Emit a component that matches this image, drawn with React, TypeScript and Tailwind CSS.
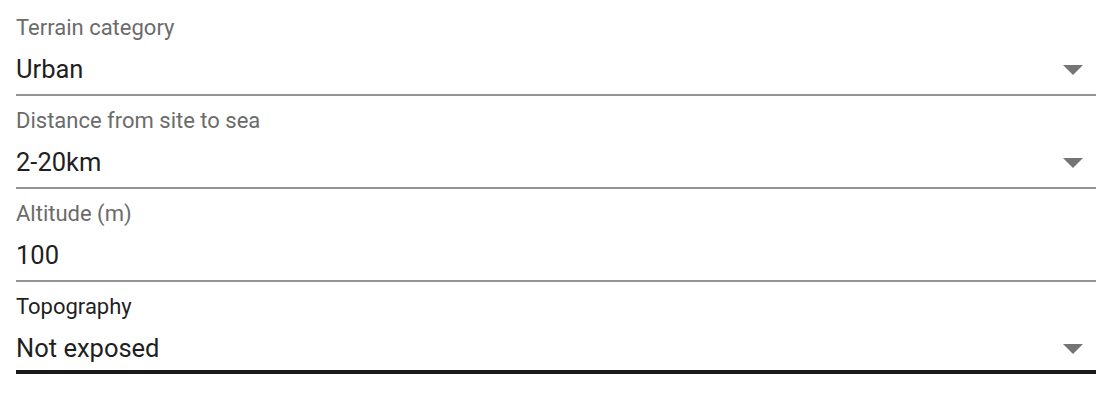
import React from 'react'

interface Field {
  label: string
  value: string
  select?: boolean
  active?: boolean
}

const fields: Field[] = [
  { label: 'Terrain category', value: 'Urban', select: true },
  { label: 'Distance from site to sea', value: '2-20km', select: true },
  { label: 'Altitude (m)', value: '100' },
  { label: 'Topography', value: 'Not exposed', select: true, active: true },
]

const ArrowDrop = () => (
  <svg width="48" height="48" viewBox="0 0 24 24" className="shrink-0 -mr-[1px]" fill="#757575">
    <path d="M7 10l5 5 5-5z" />
  </svg>
)

const FormField: React.FC<{ field: Field }> = ({ field }) => (
  <div
    className={
      field.active
        ? 'pt-[13px] pb-[8px] border-b-4 border-[#1a1a1a]'
        : 'pt-[13px] pb-[11px] border-b-2 border-[#949494]'
    }
  >
    <div className={field.active ? 'h-6 text-[22px] leading-6 text-[#1f1f1f]' : 'h-6 text-[22px] leading-6 text-[#6b6b6b]'}>
      {field.label}
    </div>
    <div className="mt-[15px] h-7 flex items-center justify-between">
      <span className="text-[25.5px] leading-7 text-[#1f1f1f]">{field.value}</span>
      {field.select && <ArrowDrop />}
    </div>
  </div>
)

export default function App() {
  return (
    <div className="w-[1118px] h-[402px] bg-white pt-[3px] pl-4 pr-[22px]" style={{ fontFamily: 'Roboto, "Noto Sans", sans-serif' }}>
      <div className="w-[1080px]">
        {fields.map((f) => (
          <FormField key={f.label} field={f} />
        ))}
      </div>
    </div>
  )
}
